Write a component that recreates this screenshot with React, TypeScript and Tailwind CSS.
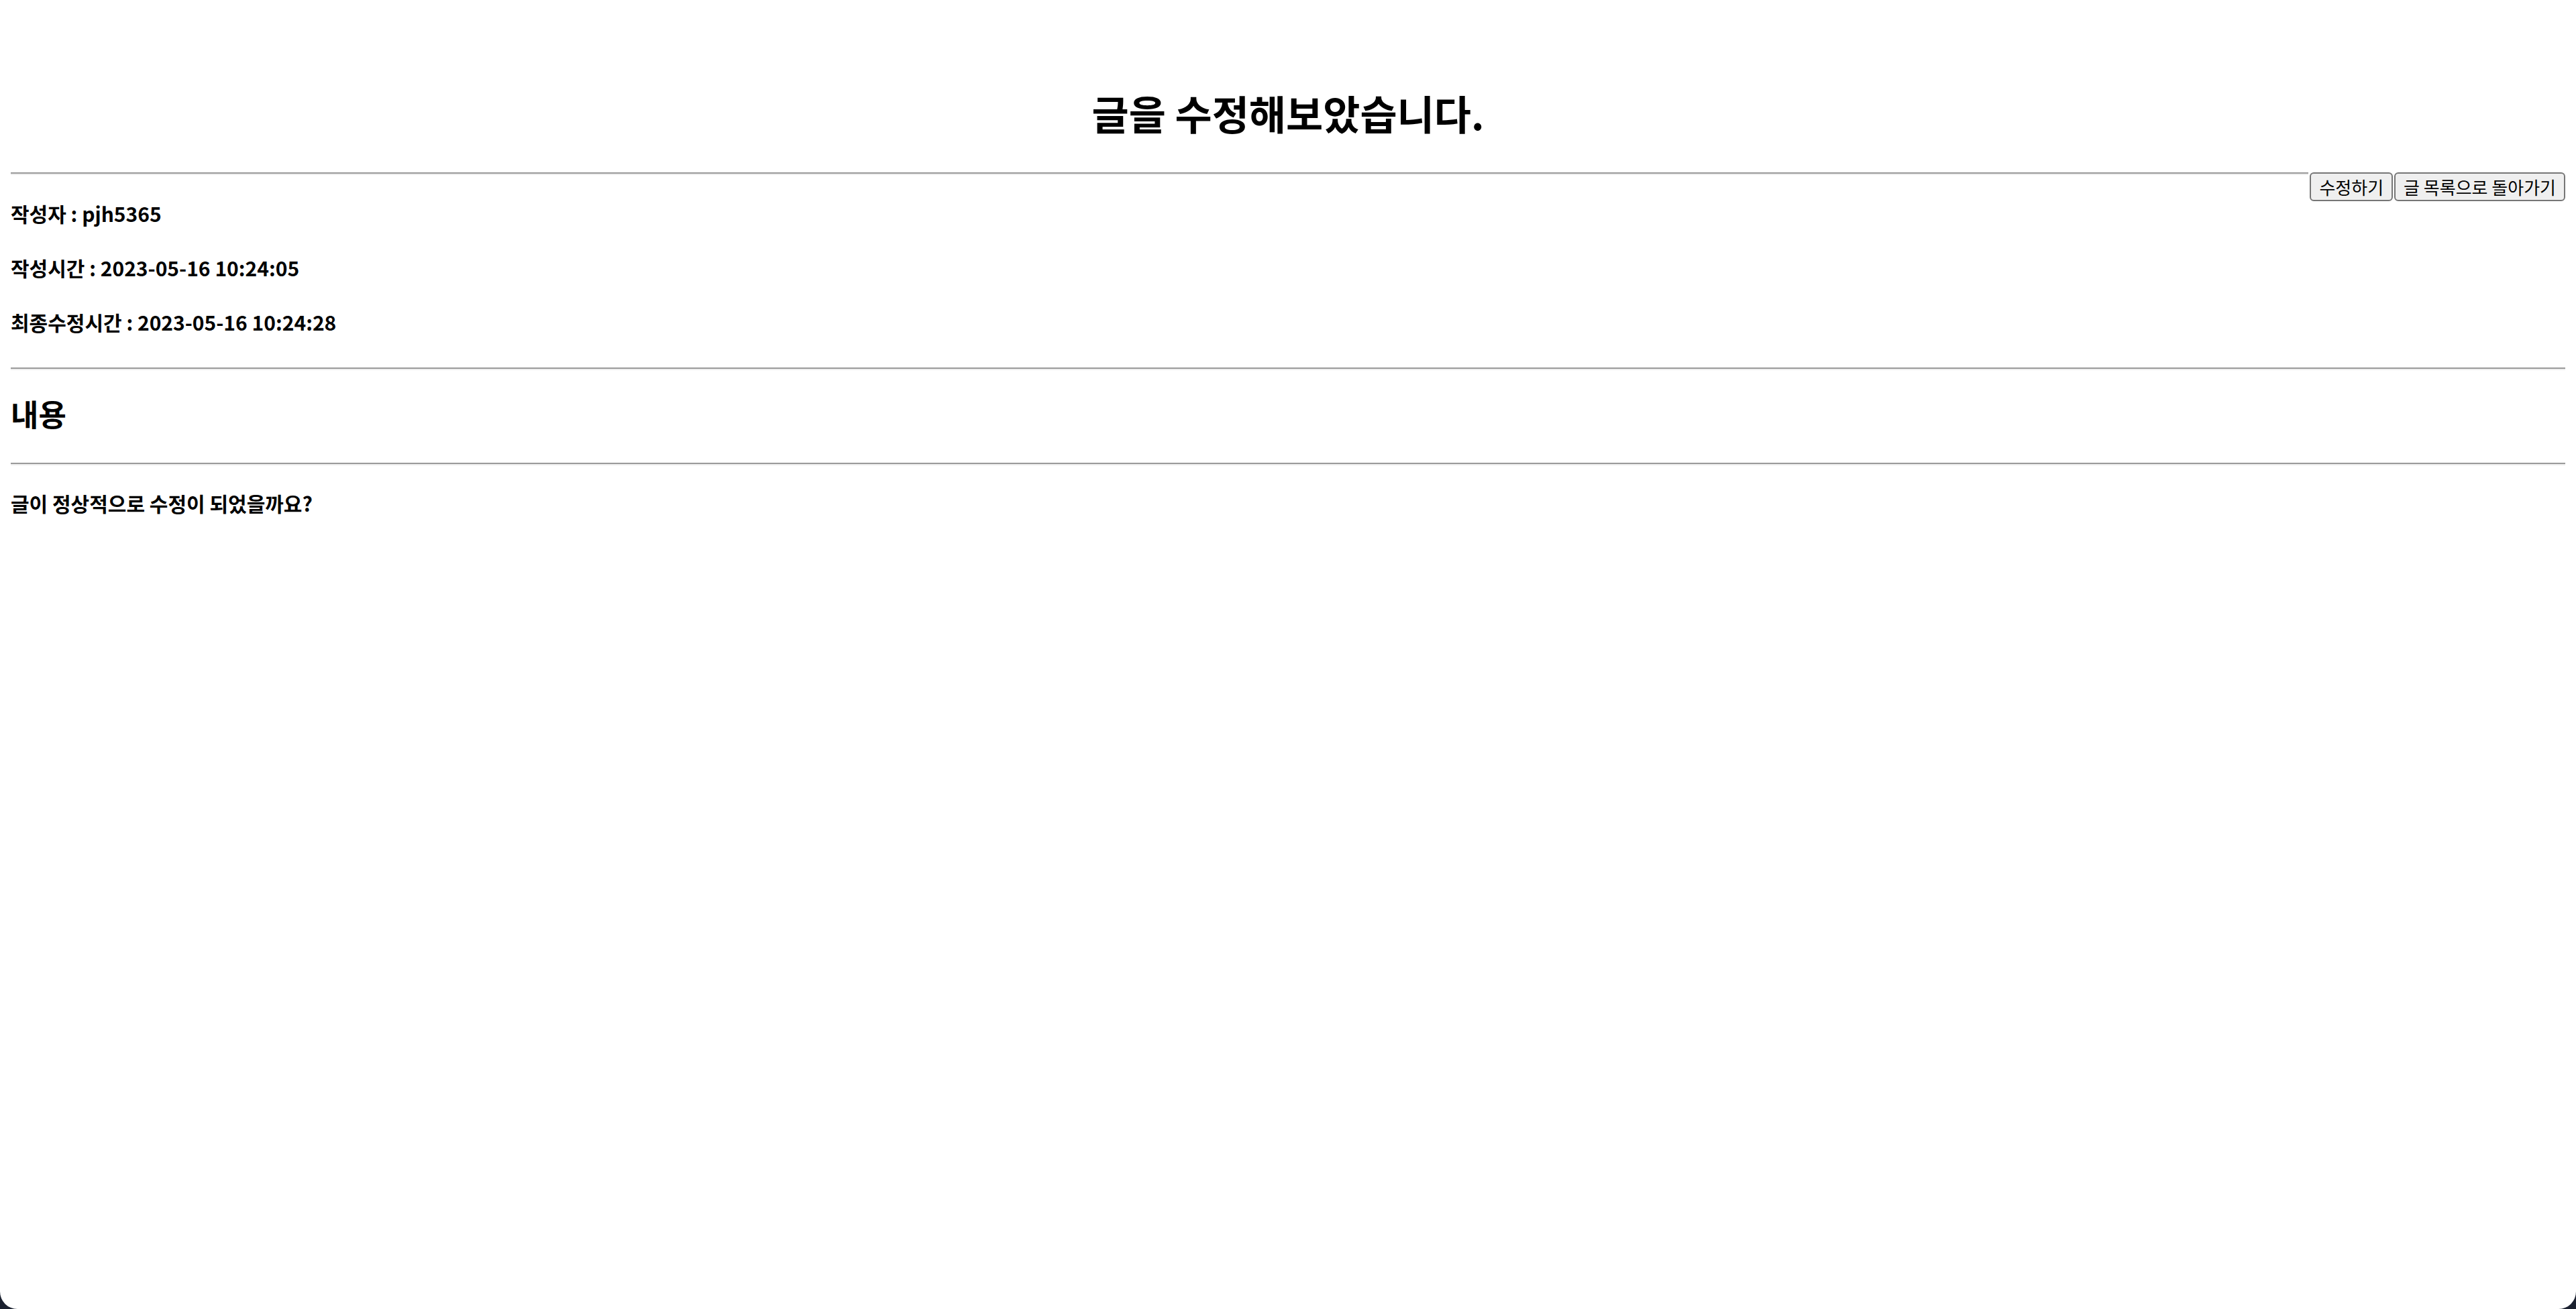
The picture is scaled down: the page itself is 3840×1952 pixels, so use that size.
import React from "react";

const font = { fontFamily: '"Noto Sans CJK KR", "Noto Sans", sans-serif' };

// inset-looking divider like the browser's default <hr>
function Divider({ className = "" }: { className?: string }) {
    return <div className={`h-[4px] border-t-2 border-b-2 border-t-[#9a9a9a] border-b-[#eeeeee] ${className}`} />;
}

function PlainButton({ label }: { label: string }) {
    return (
        <button
            className="h-[43px] px-[12px] text-[26px] leading-[35px] text-black bg-[#efefef] border-2 border-[#767676] rounded-[6px] whitespace-nowrap"
        >
            {label}
        </button>
    );
}

export default function App() {
    const meta = [
        "작성자 : pjh5365",
        "작성시간 : 2023-05-16 10:24:05",
        "최종수정시간 : 2023-05-16 10:24:28",
    ];

    return (
        <div className="h-[1952px] w-full bg-[#1b2130]" style={font}>
            <div className="h-full bg-white rounded-b-[26px] px-[16px] text-black">
                {/* 제목 */}
                <h1 className="pt-[130px] text-center text-[60px] leading-[76px] font-bold">
                    글을 수정해보았습니다.
                </h1>

                {/* 구분선 + 버튼 */}
                <div className="mt-[51px] flex items-start gap-[2px]">
                    <Divider className="flex-1" />
                    <PlainButton label="수정하기" />
                    <PlainButton label="글 목록으로 돌아가기" />
                </div>

                <div className="flex flex-col gap-[45px]">
                    {meta.map((line) => (
                        <h4 key={line} className="text-[30px] leading-[36px] font-bold">
                            {line}
                        </h4>
                    ))}
                </div>

                <Divider className="mt-[50px]" />
                <h2 className="mt-[37px] text-[45px] leading-[56px] font-bold">내용</h2>
                <Divider className="mt-[45px]" />

                <h5 className="mt-[38px] text-[30px] leading-[36px] font-bold">
                    글이 정상적으로 수정이 되었을까요?
                </h5>
            </div>
        </div>
    );
}
